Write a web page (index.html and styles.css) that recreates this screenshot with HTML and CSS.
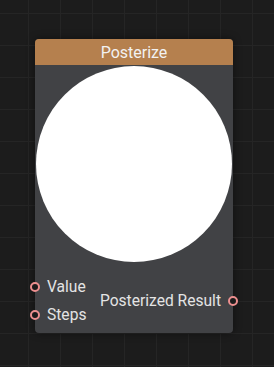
FILE: index.html
```html
<!DOCTYPE html>
<html>
<head>
<meta charset="utf-8">
<link rel="stylesheet" href="styles.css">
</head>
<body>
<div class="canvas">
  <div class="node">
    <div class="node-header">Posterize</div>
    <div class="preview"><div class="circle"></div></div>
    <div class="ports">
      <div class="inputs">
        <div class="port-row in"><span class="port"></span>Value</div>
        <div class="port-row in"><span class="port"></span>Steps</div>
      </div>
      <div class="outputs">
        <div class="port-row out">Posterized Result<span class="port"></span></div>
      </div>
    </div>
  </div>
</div>
</body>
</html>
```
FILE: styles.css
```css
html, body {
  margin: 0;
  padding: 0;
}
body {
  width: 274px;
  height: 367px;
  overflow: hidden;
  background-color: #1c1c1c;
  background-image:
    linear-gradient(to right, #252525 1px, transparent 1px),
    linear-gradient(to bottom, #252525 1px, transparent 1px);
  background-size: 32px 32px;
  background-position: 28px 13px;
  font-family: Roboto, "Liberation Sans", sans-serif;
}
.canvas {
  padding: 39px 0 0 35px;
}
.node {
  width: 198px;
  height: 294px;
  background: #414245;
  border-radius: 4px;
  box-shadow: 0 0 8px rgba(0, 0, 0, 0.45);
  display: flex;
  flex-direction: column;
}
.node-header {
  height: 26px;
  background: #b5804e;
  border-radius: 4px 4px 0 0;
  color: #f2f2f2;
  font-size: 16px;
  line-height: 27px;
  text-align: center;
}
.preview {
  height: 196px;
  padding: 1px 1px 0;
}
.circle {
  width: 196px;
  height: 196px;
  border-radius: 50%;
  background: #ffffff;
}
.ports {
  flex: 1;
  display: flex;
  justify-content: space-between;
  align-items: center;
  padding-top: 6px;
}
.port-row {
  position: relative;
  height: 28px;
  line-height: 28px;
  font-size: 15.6px;
  color: #e4e4e4;
  white-space: nowrap;
}
.port-row.in {
  padding-left: 12px;
}
.port-row.out {
  padding-right: 12px;
}
.port {
  position: absolute;
  top: 9px;
  width: 6px;
  height: 6px;
  border: 2px solid #ec8f8f;
  border-radius: 50%;
  background: #1b1b1b;
}
.port-row.in .port {
  left: -5px;
}
.port-row.out .port {
  right: -5px;
}
```
